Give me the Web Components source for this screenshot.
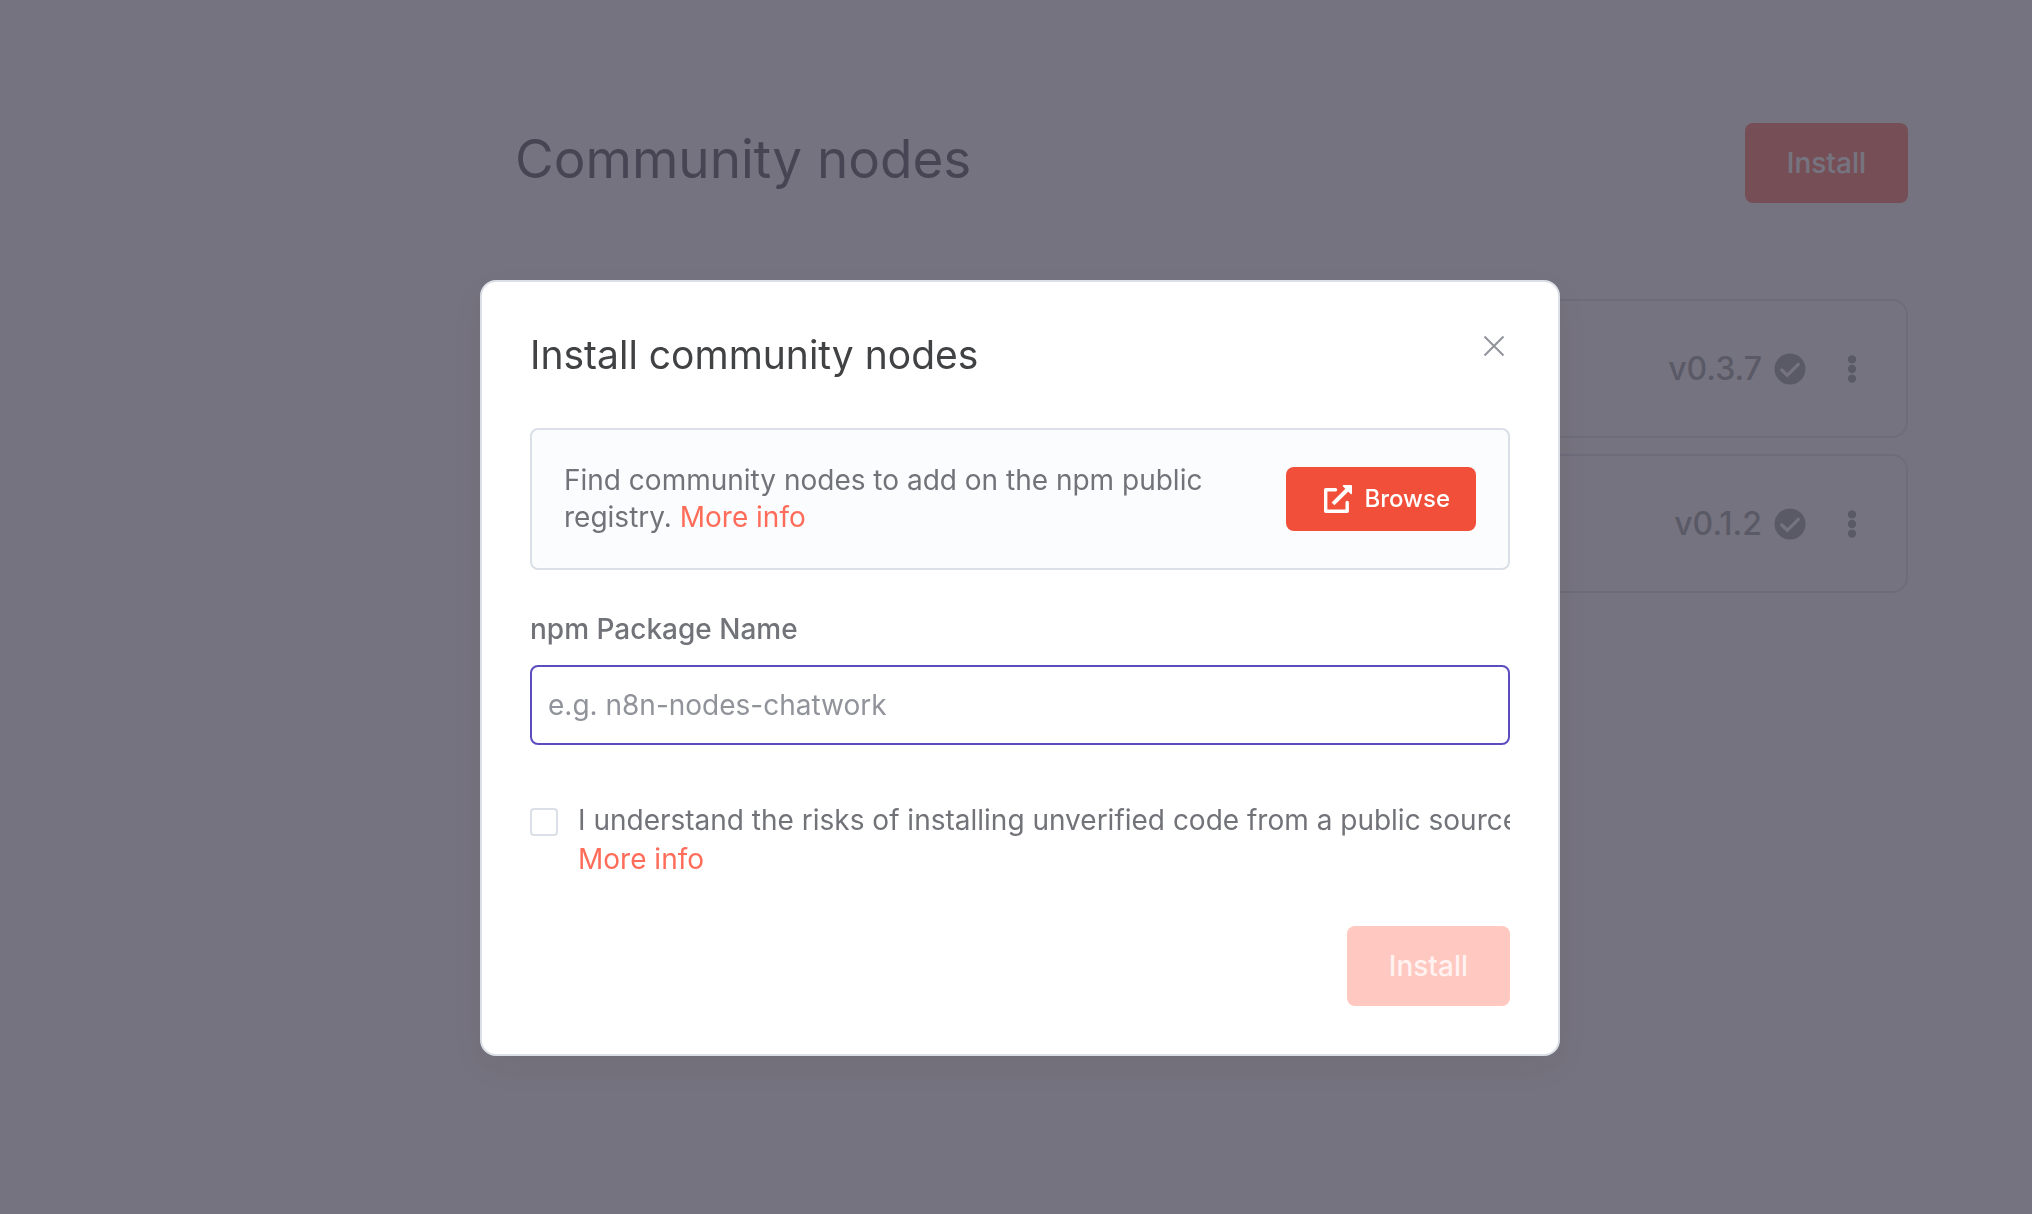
<!DOCTYPE html>
<html lang="en">
<head>
<meta charset="utf-8">
<title>Community nodes</title>
<style>
  html, body { margin: 0; height: 100%; }
  body {
    font-family: Inter, "Noto Sans", sans-serif;
    font-size: 28px;
    color: #7d7d87;
    background: #fbfbfb;
  }
</style>
</head>
<body>
<nodes-page>
  <package-card version="0.3.7"></package-card>
  <package-card version="0.1.2"></package-card>
</nodes-page>
<install-modal></install-modal>

<script>
const define = (name, html, setup) => {
  const template = document.createElement('template');
  template.innerHTML = html;
  customElements.define(name, class extends HTMLElement {
    constructor() {
      super();
      this.attachShadow({ mode: 'open' }).append(template.content.cloneNode(true));
    }
    connectedCallback() { if (setup) setup(this, this.shadowRoot); }
  });
};

define('ui-button', `
  <style>
    :host { display: inline-flex; flex: none; }
    button {
      display: flex; align-items: center; justify-content: center; gap: 12px;
      height: 80px; padding: 0 42px; border: 0; border-radius: 8px;
      background: #ff6d5a; color: #fff;
      font: 500 28px/28px Inter, "Noto Sans", sans-serif; cursor: pointer;
    }
    :host([size="small"]) button { height: 64px; padding: 0 26px 0 38px; font-size: 24px; background: #f14f39; }
    button:disabled { background: #ffc8c1; color: #fff2f0; cursor: not-allowed; }
    ::slotted(svg) { display: block; }
  </style>
  <button type="button"><slot name="icon"></slot><slot></slot></button>`,
  (el, root) => { root.querySelector('button').disabled = el.hasAttribute('disabled'); });

define('package-card', `
  <style>
    :host {
      display: flex; align-items: center; justify-content: flex-end; box-sizing: border-box;
      height: 139px; padding: 0 44px; border: 2px solid #dbdfe7; border-radius: 16px;
    }
    span { font-size: 32px; line-height: 40px; font-weight: 500; color: #909298; margin-right: 12px; }
    svg { display: block; }
    button { display: flex; margin-left: 36px; padding: 0; border: 0; background: none; cursor: pointer; }
  </style>
  <span></span>
  <svg width="32" height="32" viewBox="0 0 32 32" aria-hidden="true"><circle cx="16" cy="16" r="15.5" fill="#909298"/><path d="M7.800 17l5.500 5.300L24.300 11.300" fill="none" stroke="#fbfbfb" stroke-width="3.300" stroke-linecap="round"/></svg>
  <button type="button" aria-label="Actions"><svg width="20" height="32" viewBox="0 0 20 32" fill="#909298"><circle cx="10" cy="6.400" r="4.200"/><circle cx="10" cy="16" r="4.200"/><circle cx="10" cy="25.600" r="4.200"/></svg></button>`,
  (el, root) => { root.querySelector('span').textContent = 'v' + el.getAttribute('version'); });

define('nodes-page', `
  <style>
    :host { display: block; padding: 123px 124px 48px 515px; }
    header { display: flex; align-items: center; justify-content: space-between; margin-bottom: 96px; }
    h1 { margin: 0; font-size: 53px; line-height: 70px; font-weight: 400; color: #45424d; padding-bottom: 8px; }
    section { display: flex; flex-direction: column; gap: 16px; }
  </style>
  <header><h1>Community nodes</h1><ui-button>Install</ui-button></header>
  <section><slot></slot></section>`);

define('install-modal', `
  <style>
    :host {
      position: fixed; inset: 0; display: flex; justify-content: center; align-items: flex-start;
      padding: 280px 0 0 8px; box-sizing: border-box; background: rgba(72, 69, 86, .75);
    }
    .dialog {
      position: relative; box-sizing: border-box; width: 1080px; max-width: 100%;
      padding: 48px; border: 2px solid #dbdfe7; border-radius: 16px; background: #fff;
      box-shadow: 0 12px 32px rgba(68, 28, 23, .06);
      color: #717379;
    }
    h2 { margin: 0 0 48px; font-size: 39px; line-height: 50px; font-weight: 400; color: #414244; }
    .close { position: absolute; top: 48px; right: 48px; display: flex; padding: 0; border: 0; background: none; cursor: pointer; }
    .notice {
      display: flex; align-items: center; justify-content: space-between;
      padding: 32px; border: 2px solid #dbdfe7; border-radius: 8px; background: #fbfcfe; line-height: 37px;
    }
    .notice p { margin: 0; max-width: 680px; }
    a { color: #ff6d5a; text-decoration: none; }
    .field { display: flex; flex-direction: column; gap: 16px; margin-top: 39px; }
    .field label { font-weight: 500; line-height: 40px; }
    .field input {
      height: 80px; box-sizing: border-box; width: 100%; padding: 0 16px; margin: 0;
      border: 2px solid #5b4cbf; border-radius: 8px; outline: 0; background: #fff;
      font: 400 28px/36px Inter, "Noto Sans", sans-serif; color: #555;
    }
    .field input::placeholder { color: #909399; opacity: 1; }
    .consent { display: flex; gap: 20px; align-items: flex-start; margin-top: 56px; overflow: hidden; line-height: 39px; white-space: nowrap; }
    .consent input {
      appearance: none; flex: none; box-sizing: border-box; width: 28px; height: 28px; margin: 7px 0 0;
      border: 2px solid #dbdfe7; border-radius: 4px; background: #fff;
    }
    footer { display: flex; justify-content: flex-end; margin-top: 47px; }
  </style>
  <div class="dialog" role="dialog" aria-modal="true" aria-labelledby="title">
    <h2 id="title">Install community nodes</h2>
    <button class="close" type="button" aria-label="Close"><svg width="32" height="32" viewBox="0 0 32 32" fill="none" stroke="#909399" stroke-width="2"><path d="M6.500 6.500l19 19M25.500 6.500l-19 19"/></svg></button>
    <div class="notice">
      <p>Find community nodes to add on the npm public registry. <a href="#registry">More info</a></p>
      <ui-button size="small"><svg slot="icon" width="28" height="28" viewBox="0 0 28 28" aria-hidden="true"><path d="M11.500 4.700H1.700V26.200H23.200V17.500" fill="none" stroke="#fff" stroke-width="3.400" stroke-linejoin="round" stroke-linecap="round"/><path d="M9 18.800L23.500 4.500" fill="none" stroke="#fff" stroke-width="4"/><path d="M19.500 0H27q1 0 1 1V8.500q0 1-1 .7L18.800 1.200q-.3-1.200.7-1.200z" fill="#fff"/></svg>Browse</ui-button>
    </div>
    <div class="field">
      <label for="package">npm Package Name</label>
      <input id="package" type="text" placeholder="e.g. n8n-nodes-chatwork">
    </div>
    <div class="consent">
      <input id="risk" type="checkbox">
      <div><label for="risk">I understand the risks of installing unverified code from a public source.</label><br><a href="#risks">More info</a></div>
    </div>
    <footer><ui-button disabled>Install</ui-button></footer>
  </div>`);
</script>
</body>
</html>
